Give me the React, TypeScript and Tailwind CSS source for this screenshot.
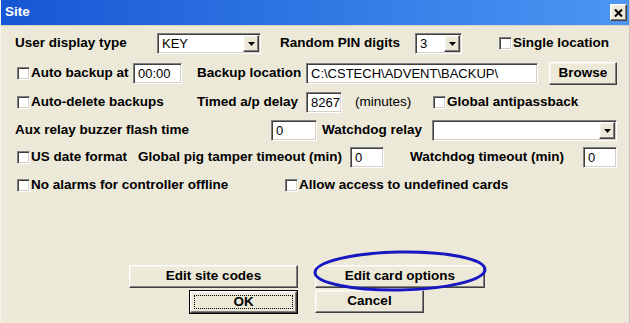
import React from 'react';

const sunken = "bg-white border border-t-[#808080] border-l-[#808080] border-b-white border-r-white shadow-[inset_1px_1px_0_#404040,inset_-1px_-1px_0_#d4d0c8]";
const raised = "bg-[#ECE9D8] border border-t-white border-l-white border-b-[#404040] border-r-[#404040] shadow-[inset_-1px_-1px_0_#808080,inset_1px_1px_0_#f4f2ea]";

function CheckBox() {
    return <span className={`inline-block w-[13px] h-[13px] shrink-0 ${sunken}`}/>
}

function Field({w, value}: { w: string, value?: string }) {
    return (
        <div className={`${w} h-[21px] shrink-0 flex items-center pl-[4px] font-normal text-[13px] ${sunken}`}>
            {value}
        </div>
    )
}

function Select({w, value}: { w: string, value?: string }) {
    return (
        <div className={`${w} h-[21px] shrink-0 flex items-center justify-between pl-[4px] pr-[1px] font-normal text-[13px] ${sunken}`}>
            <span>{value}</span>
            <span className={`w-[16px] h-[17px] flex items-center justify-center ${raised}`}>
                <svg width="7" height="4" viewBox="0 0 7 4"><path d="M0 0h7L3.5 4z" fill="#000"/></svg>
            </span>
        </div>
    )
}

function Button({w, children, isDefault}: { w: string, children: React.ReactNode, isDefault?: boolean }) {
    if (isDefault) {
        return (
            <div className={`${w} h-[24px] shrink-0 border border-black`}>
                <div className={`w-full h-full flex items-center justify-center p-[3px] ${raised}`}>
                    <div className="w-full h-full border border-dotted border-black flex items-center justify-center">
                        {children}
                    </div>
                </div>
            </div>
        )
    }
    return (
        <div className={`${w} h-[23px] shrink-0 flex items-center justify-center ${raised}`}>
            {children}
        </div>
    )
}

export default function App() {
    return (
        <div className="relative w-[630px] h-[323px] overflow-hidden bg-[#ECE9D8] text-black text-[13.5px] font-bold font-['Liberation_Sans',Arial,sans-serif] border-l border-l-[#f6f4ec] border-r border-r-[#c8c4b4]">
            <div className="h-[26px] flex items-center justify-between pl-[4px] pr-[2px] bg-gradient-to-r from-[#1656d4] to-[#4d96f3] border-b border-b-[#d8d4c4]">
                <span className="text-white text-[13.5px]">Site</span>
                <span className={`w-[17px] h-[17px] flex items-center justify-center ${raised}`}>
                    <svg width="9" height="8" viewBox="0 0 9 8"><path d="M1 0.5l7 7M8 0.5l-7 7" stroke="#000" strokeWidth="2"/></svg>
                </span>
            </div>

            <div className="flex flex-col pl-[14px] pt-[7px]">
                <div className="h-[21px] flex items-center">
                    <span className="w-[142px] shrink-0">User display type</span>
                    <Select w="w-[104px]" value="KEY"/>
                    <span className="ml-[19px] w-[135px] shrink-0">Random PIN digits</span>
                    <Select w="w-[47px]" value="3"/>
                    <span className="ml-[37px] flex"><CheckBox/></span>
                    <span className="ml-[1px]">Single location</span>
                </div>

                <div className="h-[21px] mt-[9px] flex items-center">
                    <span className="ml-[2px] flex"><CheckBox/></span>
                    <span className="ml-[1px] w-[102px] shrink-0">Auto backup at</span>
                    <Field w="w-[49px]" value="00:00"/>
                    <span className="ml-[15px] w-[109px] shrink-0">Backup location</span>
                    <Field w="w-[232px]" value="C:\CSTECH\ADVENT\BACKUP\"/>
                    <div className="ml-[11px]"><Button w="w-[68px]">Browse</Button></div>
                </div>

                <div className="h-[21px] mt-[8px] flex items-center">
                    <span className="ml-[2px] flex"><CheckBox/></span>
                    <span className="ml-[1px] w-[166px] shrink-0">Auto-delete backups</span>
                    <span className="w-[109px] shrink-0">Timed a/p delay</span>
                    <Field w="w-[36px]" value="8267"/>
                    <span className="ml-[13px] w-[78px] shrink-0 font-normal">(minutes)</span>
                    <span className="flex"><CheckBox/></span>
                    <span className="ml-[1px]">Global antipassback</span>
                </div>

                <div className="h-[21px] mt-[7px] flex items-center">
                    <span className="w-[256px] shrink-0">Aux relay buzzer flash time</span>
                    <Field w="w-[46px]" value="0"/>
                    <span className="ml-[5px] w-[110px] shrink-0">Watchdog relay</span>
                    <Select w="w-[185px]"/>
                </div>

                <div className="h-[21px] mt-[6px] flex items-center">
                    <span className="ml-[2px] flex"><CheckBox/></span>
                    <span className="ml-[1px] w-[107px] shrink-0">US date format</span>
                    <span className="w-[212px] shrink-0">Global pig tamper timeout (min)</span>
                    <Field w="w-[34px]" value="0"/>
                    <span className="ml-[26px] w-[173px] shrink-0">Watchdog timeout (min)</span>
                    <Field w="w-[34px]" value="0"/>
                </div>

                <div className="h-[21px] mt-[7px] flex items-center">
                    <span className="ml-[2px] flex"><CheckBox/></span>
                    <span className="ml-[1px] w-[254px] shrink-0">No alarms for controller offline</span>
                    <span className="flex"><CheckBox/></span>
                    <span className="ml-[1px]">Allow access to undefined cards</span>
                </div>

                <div className="mt-[69px] flex flex-col gap-[2px]">
                    <div className="flex">
                        <div className="ml-[114px]"><Button w="w-[169px]">Edit site codes</Button></div>
                        <div className="ml-[17px]"><Button w="w-[170px]">Edit card options</Button></div>
                    </div>
                    <div className="flex">
                        <div className="ml-[174px]"><Button w="w-[109px]" isDefault>OK</Button></div>
                        <div className="ml-[17px]"><Button w="w-[109px]">Cancel</Button></div>
                    </div>
                </div>
            </div>

            <svg className="absolute left-[310px] top-[248px]" width="180" height="48" viewBox="0 0 180 48">
                <ellipse cx="89" cy="23" rx="85" ry="19" fill="none" stroke="#1818c0" strokeWidth="3" transform="rotate(-1 89 23)"/>
            </svg>
        </div>
    );
};
